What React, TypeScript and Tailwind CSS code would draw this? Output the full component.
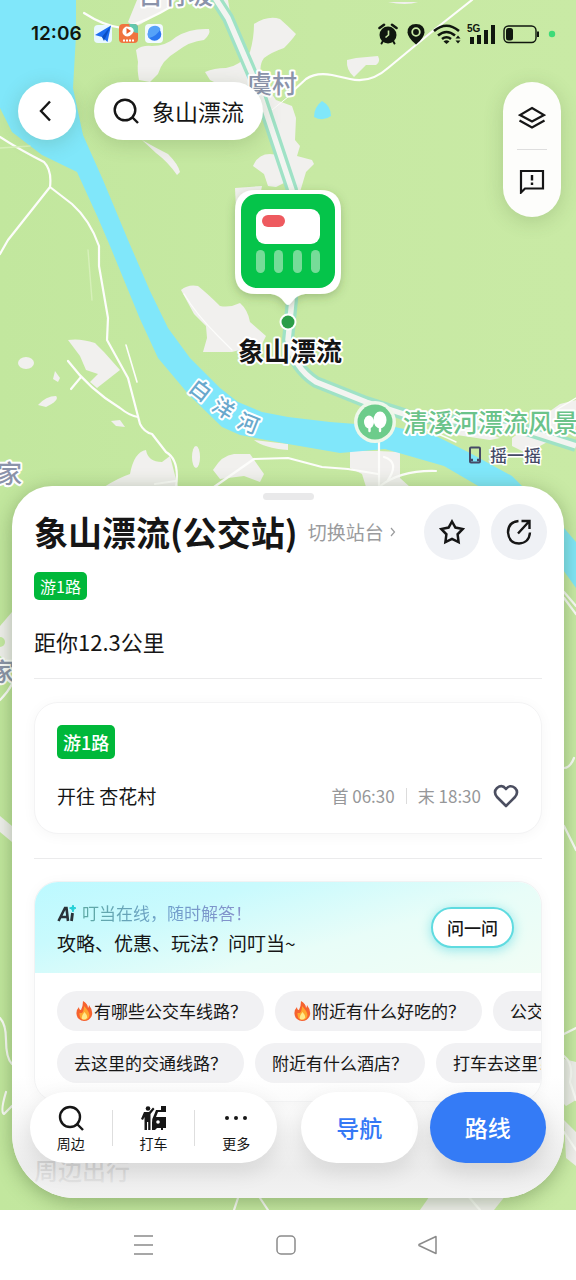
import type { ReactNode } from 'react';

type Chip = { text: string; hot?: boolean };

const CHIP_ROWS: Chip[][] = [
  [
    { text: '有哪些公交车线路？', hot: true },
    { text: '附近有什么好吃的？', hot: true },
    { text: '公交' },
  ],
  [{ text: '去这里的交通线路？' }, { text: '附近有什么酒店？' }, { text: '打车去这里？' }],
];

/** Map canvas: river, roads, villages and the station marker */
function MapCanvas() {
  return (
    <svg
      className="absolute inset-0 w-full h-full"
      viewBox="0 0 576 1210"
      preserveAspectRatio="xMidYMin slice"
      aria-label="地图"
    >
      <defs>
        <filter id="pinShadow" x="-30%" y="-30%" width="160%" height="160%">
          <feDropShadow dx="0" dy="3" stdDeviation="5" floodColor="#3c5a28" floodOpacity="0.3" />
        </filter>
        <linearGradient id="land" x1="0" x2="1" y1="0" y2="0">
          <stop offset="0" stopColor="#c2e79e" />
          <stop offset="0.55" stopColor="#c7e9a3" />
          <stop offset="1" stopColor="#c9eaa5" />
        </linearGradient>
      </defs>
      <rect width="576" height="1210" fill="url(#land)" />

      {/* villages */}
      <g fill="#f1f0ee">
        <path d="M137 0 128 22Q134 28 141 24L170 6 176 0Z" />
        <path d="M136 50Q142 45 152 46 166 46 176 37 190 28 209 29 211 34 204 40 190 41 176 52 162 60 158 74L150 82 139 80Q137 70 138 62Z" />
        <path d="M205 72Q214 68 226 68 240 66 250 52 254 38 254 24 268 15 280 19 288 26 296 34 292 40 284 48 272 52 264 58 258 66 262 80L276 100 292 106 296 118 295 140 300 146 297 156 312 160 314 164 306 172 300 192 290 188 268 120 254 84 226 88 210 80Z" />
        <path d="M220 0H228L230 12Q222 12 218 4Z" />
        <path d="M142 140Q156 148 168 154 178 164 180 172L177 175Q168 162 156 153Z" />
        <path d="M253 166Q258 154 270 154L288 156 290 180 276 187 268 186 264 174Z" />
        <path d="M235 188 262 186 258 206 236 210Z" />
        <path d="M347 60 356 58 378 56Q381 62 376 65L366 65 354 77Q346 70 347 60Z" />
        <path d="M388 2 418 2Q406 6 388 2Z" />
        <path d="M181 290Q188 284 198 286 208 294 220 306 230 308 240 303 248 310 250 322L266 336 262 344 232 352 203 352 207 338 206 326 194 314Z" />
        <path d="M68 340Q80 338 95 343L104 352 120 370 97 388 90 382 98 374 86 370 80 356Z" />
        <ellipse cx="26" cy="363" rx="8" ry="6" />
        <path d="M55 371 60 378 58 382 53 379Z" />
        <path d="M38 405Q46 396 56 396 60 400 46 407Z" />
        <path d="M111 421 120 420 125 427 116 426Z" />
        <path d="M104 487Q118 478 130 474 134 452 146 450 148 462 162 462L170 456 178 487Z" />
        <path d="M213 470Q222 455 234 454L250 454 264 474 260 482 244 476 220 479Z" />
        <ellipse cx="196" cy="457" rx="4" ry="11" />
        <path d="M254 440Q270 442 288 444V450Q264 448 254 440Z" />
        <path d="M350 451 378 451 400 452 400 478 410 487 366 487 362 474 350 468Z" />
        <path d="M430 424 480 430 500 438 490 440 450 434ZM512 438 560 404 576 400V426L540 446 524 452 512 446Z" />
        <path d="M0 626 12 612V664L0 656Z" />
        <path d="M0 816 12 826V842L0 832Z" />
        <path d="M560 1058 576 1062V1100L566 1106 560 1100ZM564 1120 576 1132V1166L566 1158Z" />
        <path d="M420 1210 434 1190H510L494 1210Z" />
      </g>
      <circle cx="0" cy="642" r="5" fill="#c5e9a2" />

      {/* river */}
      <path
        fill="#80e7fa"
        d="M0 0H76V35L73 88 83 135 103 180 128 240 150 291 168 328 190 358 220 388 238 402 262 412 288 417 330 422 395 427 436 436 470 453 512 476 564 528 576 542V588L556 560 480 487 444 466 385 449 340 453 288 444 240 435 222 427 190 396 158 358 140 319 110 246 98 218 77 172 42 155 12 132 0 108Z"
      />
      <path d="M322 101Q331 106 331 116 323 122 314 117 314 107 322 101Z" fill="#80e7fa" />

      {/* country roads */}
      <g fill="none" stroke="#fdfdfb" strokeWidth="2.2" strokeLinejoin="round" strokeLinecap="round">
        <path d="M0 137Q20 150 44 162 52 170 50 187L8 240 0 254M50 187 72 204Q90 220 99 246L99 266 108 318 107 340 128 378 140 424Q144 432 152 434L166 452Q180 460 176 487" />
        <path d="M68 361Q90 390 120 408 130 416 138 417M81 377 71 389" />
        <path d="M84 13Q104 26 122 28 146 22 172 6" />
        <path d="M294 90 306 79Q316 72 332 75L350 79Q370 84 388 68L434 30 472 0" />
        <path d="M272 110 294 92" strokeWidth="1" />
        <path d="M126 345 137 382" strokeWidth="1.6" />
        <path d="M184 294Q196 314 218 336L232 350" strokeWidth="1.2" />
        <path d="M155 484 176 481M214 487 254 459 288 458 322 467 348 469 378 474M379 442V487M379 487Q400 470 436 471M384 457Q400 462 388 480" />
        <path d="M556 410 576 398M418 427Q440 434 456 442" strokeWidth="1.4" />
        <path d="M0 700Q8 692 12 684M0 1018Q6 1024 6 1040 6 1058 12 1064M6 1092Q0 1112 4 1114L12 1106M564 592 576 606M564 598 576 614M564 768Q570 768 574 758M564 826 576 850M564 1034 576 1028M564 1056Q574 1064 570 1082L576 1100M564 1132 576 1150M238 1198 234 1210M260 1198 268 1210M468 1196 480 1210" />
        <path d="M0 148 30 146M88 250 92 300" stroke="#d6f0b9" strokeWidth="1.4" />
      </g>

      {/* highway */}
      <g fill="none" strokeLinejoin="round">
        <path d="M210-10 228 18 258 88 292 190 292 300 288 340Q294 368 316 382L366 402 410 416 520 428 576 446" stroke="#9fe2c6" strokeWidth="12" />
        <path d="M210-10 228 18 258 88 292 190 292 300 288 340Q294 368 316 382L366 402 410 416 520 428 576 446" stroke="#f3f4f1" strokeWidth="5.500" />
      </g>

      {/* place names */}
      <g
        fontFamily="'Noto Sans CJK SC', sans-serif"
        fontWeight="500"
        stroke="#ffffff"
        strokeWidth="4"
        strokeLinejoin="round"
        paintOrder="stroke"
      >
        <g fill="#8b93aa" fontSize="25">
          <text x="138" y="4">吉竹坡</text>
          <text x="247" y="93">虞村</text>
          <text x="-3" y="483">家</text>
          <text x="-10" y="681">家</text>
        </g>
        <g fill="#68a8cc" fontSize="21" textAnchor="middle">
          <text transform="translate(200 391) rotate(38)" y="7">白</text>
          <text transform="translate(223 409) rotate(32)" y="7">洋</text>
          <text transform="translate(248 424) rotate(22)" y="7">河</text>
        </g>
        <text x="403" y="432" fill="#6bc38a" fontSize="25">清溪河漂流风景区</text>
      </g>

      {/* scenic spot */}
      <g>
        <circle cx="375" cy="422" r="21" fill="#eef7ea" />
        <circle cx="375" cy="422" r="17.500" fill="#6dcc8b" />
        <ellipse cx="369" cy="422" rx="5" ry="6.500" fill="#fff" />
        <ellipse cx="380" cy="420" rx="6.500" ry="8.500" fill="#fff" />
        <path d="M369.500 420V431M380 420V431" stroke="#fff" strokeWidth="2.400" strokeLinecap="round" />
      </g>

      {/* station marker */}
      <path
        filter="url(#pinShadow)"
        fill="#fff"
        d="M256 190H320Q341 190 341 211V273Q341 294 320 294H305Q296 295 291 303 288 307 285 303 280 295 271 294H256Q235 294 235 273V211Q235 190 256 190Z"
      />
      <rect x="241" y="194" width="94" height="94" rx="16" fill="#05c44a" />
      <rect x="256" y="209" width="64" height="35" rx="9" fill="#fff" />
      <rect x="262" y="215" width="23" height="12" rx="6" fill="#ee5a5f" />
      <g fill="#76dc98">
        <rect x="256" y="250" width="9" height="23" rx="4.500" />
        <rect x="274" y="250" width="9" height="23" rx="4.500" />
        <rect x="293" y="250" width="9" height="23" rx="4.500" />
        <rect x="311" y="250" width="9" height="23" rx="4.500" />
      </g>
      <circle cx="288" cy="322" r="8.500" fill="#fff" />
      <circle cx="288" cy="322" r="6.500" fill="#2a9d48" />
      <text
        x="290"
        y="361"
        textAnchor="middle"
        fontFamily="'Noto Sans CJK SC', sans-serif"
        fontSize="26"
        fontWeight="700"
        fill="#151515"
        stroke="#fff"
        strokeWidth="4"
        strokeLinejoin="round"
        paintOrder="stroke"
      >
        象山漂流
      </text>
    </svg>
  );
}

function StatusBar() {
  return (
    <div className="relative flex h-[68px] items-center justify-between pl-[31px] pr-5">
      <div className="flex items-center">
        <span className="w-[62px] font-['Inter',sans-serif] text-[19px] leading-6 font-semibold text-[#10170f]">12:06</span>
        <svg width="72" height="20" viewBox="0 0 72 20" aria-hidden="true">
          <rect x="1" y="1" width="18" height="18" rx="4" fill="#e9f8ff" />
          <path d="M2 11 18 1.500 14.500 18 9 13Z" fill="#1c6df0" />
          <path d="M9 13 18 1.500 11 17Z" fill="#0b4fc4" />
          <rect x="26" y="0" width="19" height="19" rx="4" fill="#f0743f" />
          <path d="M36 0H41Q45 0 45 4V9Q38 9 36 0Z" fill="#63c7ae" />
          <path d="M33 2.500Q28 5 30 10 34 15 39 10 43 6 38 3Z" fill="#fff" />
          <path d="M33.500 4 38 7 33.500 10Z" fill="#e9602d" />
          <path d="M30 16.500H41" stroke="#fff" strokeWidth="2" strokeDasharray="2 1" />
          <rect x="52" y="0" width="18" height="19" rx="4" fill="#f2faff" />
          <circle cx="61.500" cy="10" r="6.800" fill="#2b78f0" />
          <path d="M56 14Q64 12 67.500 5A6.800 6.800 0 0 0 55 8Q54 12 56 14Z" fill="#56a2f8" />
        </svg>
      </div>
      <svg width="178" height="22" viewBox="0 0 178 22" fill="#10170f" aria-hidden="true">
        {/* alarm */}
        <circle cx="10" cy="12" r="8.500" />
        <path d="M1.500 5 6 1.800M18.500 5 14 1.800" stroke="#10170f" strokeWidth="2.600" strokeLinecap="round" />
        <path d="M5 18 3.500 20.500M15 18 16.500 20.500" stroke="#10170f" strokeWidth="2" strokeLinecap="round" />
        <path d="M10.500 7.500V12L7.500 14.500" stroke="#c9eaa5" strokeWidth="1.600" fill="none" />
        {/* location */}
        <path d="M38 1Q46.500 1 46.500 9.500 46 15 38 21.500 30 15 29.500 9.500 29.500 1 38 1Z" />
        <circle cx="38" cy="9" r="3.800" fill="none" stroke="#c9eaa5" strokeWidth="1.800" />
        {/* wifi */}
        <g fill="none" stroke="#10170f" strokeWidth="2.600">
          <path d="M56 8Q68.500-2.500 81 8" />
          <path d="M60 12.500Q68.500 5.500 77 12.500" />
          <path d="M64 16Q68.500 12.500 73 16" />
        </g>
        <path d="M65.500 18.500Q68.500 16 71.500 18.500L68.500 21Z" />
        <path d="M77.500 15.500 80 12.500 82.500 15.500ZM77.500 17.500 80 20.500 82.500 17.500Z" />
        {/* signal */}
        <text x="89" y="9" fontFamily="'Liberation Sans', sans-serif" fontWeight="700" fontSize="10">5G</text>
        <path d="M92 14h4v7h-4ZM99 12h4v9h-4ZM106 7h4v14h-4ZM113 2h4v19h-4Z" />
        {/* battery */}
        <rect x="126" y="3" width="32" height="16.500" rx="4.500" fill="none" stroke="#10170f" strokeWidth="1.400" />
        <rect x="128" y="5" width="7" height="12.500" rx="2.500" />
        <path d="M159 8.500H161V14H159Z" />
        <circle cx="174" cy="11" r="3.200" fill="#3ddb78" />
      </svg>
    </div>
  );
}

function MapControls() {
  return (
    <div className="relative flex items-start justify-between px-[15px] pt-[14px] pl-[18px] text-[#161616]">
      <div className="flex gap-[18px]">
        <button aria-label="返回" className="grid size-[58px] place-items-center rounded-full bg-white pr-1 shadow-[0_4px_20px_rgba(60,90,40,0.2)]">
          <svg width="14" height="22" viewBox="0 0 14 22" fill="none" stroke="currentColor" strokeWidth="2.400">
            <path d="M12 1.500 3 11 12 20.500" />
          </svg>
        </button>
        <button className="flex h-[58px] items-center gap-3 rounded-full bg-white pr-[19px] pl-[18px] shadow-[0_4px_20px_rgba(60,90,40,0.2)]">
          <svg width="28" height="28" viewBox="0 0 28 28" fill="none" stroke="currentColor" strokeWidth="2.400">
            <circle cx="13" cy="13" r="10.300" />
            <path d="M20 20 26 26" />
          </svg>
          <span className="text-[23px] leading-8">象山漂流</span>
        </button>
      </div>
      <div className="flex w-[58px] flex-col items-center rounded-full bg-[#fdfdfb] py-[5px] shadow-[0_4px_20px_rgba(60,90,40,0.2)]">
        <button aria-label="图层" className="grid h-[62px] w-full place-items-center">
          <svg width="28" height="24" viewBox="0 0 28 24" fill="none" stroke="currentColor" strokeWidth="2.200">
            <path d="M14 2 26 9 14 15.500 2 9Z" />
            <path d="M1.500 14.500 14 21.500 26.500 14.500" />
          </svg>
        </button>
        <span className="h-px w-[30px] bg-[#dedede]" />
        <button aria-label="反馈" className="grid h-[62px] w-full place-items-center">
          <svg width="26" height="26" viewBox="0 0 26 26" fill="none" stroke="currentColor" strokeWidth="2.200">
            <path d="M2 3H24V20.500H6L2 24.500Z" />
            <path d="M13 7V12.500M13 14.500V17" strokeWidth="2.400" />
          </svg>
        </button>
      </div>
    </div>
  );
}

function RoundButton({ label, children }: { label: string; children: ReactNode }) {
  return (
    <button aria-label={label} className="grid size-14 place-items-center rounded-full bg-[#eff1f5]">
      {children}
    </button>
  );
}

function LineCard() {
  return (
    <div className="mt-[23px] rounded-3xl border border-[#f3f3f4] bg-white px-[22px] py-[22px] shadow-[0_2px_14px_rgba(0,0,0,0.04)]">
      <span className="inline-block rounded-[5px] bg-[#00b83a] px-[6px] align-top text-[18px] leading-[34px] font-medium text-white">
        游1路
      </span>
      <div className="mt-[22px] flex h-[30px] items-center justify-between">
        <span className="text-[19px] text-[#161616]">开往 杏花村</span>
        <div className="flex items-center text-[17px] text-[#969799]">
          <span>首 06:30</span>
          <span className="mx-[11px] h-4 w-px bg-[#dcdcdc]" />
          <span>末 18:30</span>
          <button aria-label="收藏线路" className="ml-3">
            <svg width="26" height="24" viewBox="0 0 26 24" fill="none" stroke="#4b4e60" strokeWidth="2.600" strokeLinejoin="round">
              <path d="M13 22 4 13Q0 8 4 4 9 0 13 5 17 0 22 4 26 8 22 13Z" />
            </svg>
          </button>
        </div>
      </div>
    </div>
  );
}

function AssistantCard() {
  return (
    <div className="mt-[22px] overflow-hidden rounded-3xl border border-[#f1f2f3] bg-white shadow-[0_2px_14px_rgba(0,0,0,0.04)]">
      <div className="flex h-[91px] items-center justify-between bg-[linear-gradient(165deg,#bcf9ff_0%,#c9fafd_28%,#e8fdf8_62%,#f1fdf5_100%)] pr-[27px] pl-[22px]">
        <div>
          <div className="flex h-[29px] items-center gap-[6px]">
            <svg width="19" height="17" viewBox="0 0 19 17" fill="none" aria-label="Ai">
              <path d="M1.500 16 8 3H9.500L11 16M4 12H11" stroke="#2a3238" strokeWidth="2.600" />
              <path d="M15.500 8 14.500 16" stroke="#2a3238" strokeWidth="2.800" />
              <path d="M16 0Q16 3 19 3 16 3.500 16 7 15.500 3.500 12.500 3 16 3 16 0Z" fill="#21cfd6" stroke="#21cfd6" />
            </svg>
            <span className="bg-[linear-gradient(90deg,#5ea9a4,#6f9fcb_50%,#8a8fcb)] bg-clip-text text-[17px] text-transparent">
              叮当在线，随时解答！
            </span>
          </div>
          <p className="text-[19px] leading-[29px] text-[#161616]">攻略、优惠、玩法？问叮当~</p>
        </div>
        <button className="h-[41px] rounded-full border-2 border-[#5fdbe0] bg-white px-[14px] text-[17px] font-medium text-[#161616] shadow-[0_2px_12px_rgba(80,215,225,0.6)]">
          问一问
        </button>
      </div>
      <div className="flex flex-col gap-3 py-[18px] pl-[22px]">
        {CHIP_ROWS.map((row, i) => (
          <div key={i} className="flex gap-[11px]">
            {row.map(({ text, hot }) => (
              <button
                key={text}
                className="flex h-10 shrink-0 items-center rounded-full bg-[#f1f1f3] px-[17px] text-[17px] whitespace-nowrap text-[#161616]"
              >
                {hot && (
                  <svg width="20" height="20" viewBox="0 0 20 20" aria-hidden="true">
                    <path d="M9 0Q14 3 14 7 15 6 15 4 19 9 18 14 16 20 10 20 3 19 2.500 13 2 9 5 6 5 9 7 9 9 5 9 0Z" fill="#f6622f" />
                    <path d="M10 5Q15 10 15.500 14 15 19 10 19 5 18 5.500 12L8 12Q10 10 10 5Z" fill="#ffa62e" />
                    <path d="M10.500 11Q14 15 13 17 11 19.500 8 18 7 15 10.500 11Z" fill="#ffe98a" />
                  </svg>
                )}
                {text}
              </button>
            ))}
          </div>
        ))}
      </div>
    </div>
  );
}

function ToolItem({ label, children }: { label: string; children: ReactNode }) {
  return (
    <button className="flex h-[71px] flex-1 flex-col items-center pt-3">
      <span className="grid h-7 place-items-center">{children}</span>
      <span className="text-[14px] leading-[22px]">{label}</span>
    </button>
  );
}

function BottomToolbar() {
  return (
    <div className="absolute inset-x-0 bottom-0 bg-[linear-gradient(180deg,rgba(255,255,255,0)_0%,rgba(243,243,243,0.6)_35%,rgba(232,232,232,0.8)_75%,rgba(242,242,242,1)_100%)] px-[18px] pt-4 pb-[35px] text-[#161616]">
      <div className="flex">
        <div className="flex w-[247px] items-center rounded-full bg-white shadow-[0_8px_22px_rgba(0,0,0,0.10)]">
          <ToolItem label="周边">
            <svg width="26" height="26" viewBox="0 0 26 26" fill="none" stroke="currentColor" strokeWidth="2.400">
              <circle cx="12" cy="12" r="10" />
              <path d="M18.500 18.500 25 25" />
            </svg>
          </ToolItem>
          <span className="h-9 w-px bg-[#dedede]" />
          <ToolItem label="打车">
            <svg width="26" height="25" viewBox="0 0 26 25" fill="currentColor">
              <circle cx="7" cy="2.500" r="2.300" />
              <path d="M3 6H8L12 1.500 13.500 3 9.500 8V24H7.200V16H6V24H3.500V11L2 14 0 13Z" />
              <path d="M20 0H25V4H20ZM15 4H25V6H17L15 11H25V22H22V24H20V22H16L14 24H11V17Q11 12 13 9Z" />
              <circle cx="17" cy="16" r="1.800" fill="#fff" />
            </svg>
          </ToolItem>
          <span className="h-9 w-px bg-[#dedede]" />
          <ToolItem label="更多">
            <svg width="24" height="6" viewBox="0 0 24 6" fill="currentColor">
              <circle cx="3" cy="3" r="2" />
              <circle cx="12" cy="3" r="2" />
              <circle cx="21" cy="3" r="2" />
            </svg>
          </ToolItem>
        </div>
        <button className="ml-6 h-[71px] flex-1 rounded-full bg-white text-[23px] font-medium text-[#3478f6] shadow-[0_8px_22px_rgba(0,0,0,0.10)]">
          导航
        </button>
        <button className="ml-3 h-[71px] flex-1 rounded-full bg-[#347bf6] text-[23px] font-medium text-white shadow-[0_8px_22px_rgba(0,0,0,0.12)]">
          路线
        </button>
      </div>
    </div>
  );
}

function StationSheet() {
  return (
    <section className="relative mx-3 mb-3 overflow-hidden rounded-t-[40px] rounded-b-[64px] bg-white px-[22px] pt-[7px] shadow-[0_4px_20px_rgba(60,90,40,0.4)]">
      <div className="mx-auto h-[7px] w-[51px] rounded-full bg-[#e9e9ea]" />
      <div className="-mr-[5px] mt-1 flex h-14 items-center">
        <h1 className="text-[34px] leading-[48px] font-bold whitespace-nowrap text-[#161616]">象山漂流(公交站)</h1>
        <a href="#platform" className="ml-[10px] flex items-center gap-[6px] text-[19px] whitespace-nowrap text-[#9a9b9d]">
          切换站台
          <svg width="6" height="10" viewBox="0 0 6 10" fill="none" stroke="currentColor" strokeWidth="1.200">
            <path d="M1 1 4.500 5 1 9" />
          </svg>
        </a>
        <div className="ml-auto flex gap-[11px]">
          <RoundButton label="收藏">
            <svg width="26" height="26" viewBox="0 0 26 26" fill="none" stroke="#161616" strokeWidth="2.500">
              <path d="M13 2.500 16.400 8.600 23.800 10 18.600 15.300 19.600 23 13 19.800 6.400 23 7.400 15.300 2.200 10 9.600 8.600Z" />
            </svg>
          </RoundButton>
          <RoundButton label="分享">
            <svg width="26" height="28" viewBox="0 0 26 28" fill="none" stroke="#161616" strokeWidth="2.400">
              <path d="M12.500 3Q2 4 2 14.500 3 25.500 13 25.500 23 25 24 14.500" />
              <path d="M12 15.500 23 3.500M15.500 3H23.500V11" />
            </svg>
          </RoundButton>
        </div>
      </div>
      <span className="mt-3 block w-fit rounded-[5px] bg-[#00b83a] px-[6px] text-[16px] leading-7 text-white">游1路</span>
      <p className="mt-[27px] text-[22px] leading-7 text-[#161616]">距你12.3公里</p>
      <hr className="mt-[23px] border-[#ebebec]" />
      <LineCard />
      <hr className="mt-6 border-[#ebebec]" />
      <AssistantCard />
      <h2 className="mt-[54px] pb-[14px] text-[24px] leading-7 font-medium text-[#161616]/50">周边出行</h2>
      <BottomToolbar />
    </section>
  );
}

function SystemNav() {
  return (
    <nav className="flex h-[70px] items-center justify-center gap-[118px] bg-white pr-1 text-[#8b8b8b]">
      <button aria-label="最近任务">
        <svg width="24" height="24" viewBox="0 0 24 24" fill="none" stroke="currentColor" strokeWidth="1.500">
          <path d="M2 3H21M2 12H21M2 21H21" />
        </svg>
      </button>
      <button aria-label="主屏幕">
        <svg width="24" height="24" viewBox="0 0 24 24" fill="none" stroke="currentColor" strokeWidth="1.500">
          <rect x="3" y="3" width="18" height="18" rx="4" />
        </svg>
      </button>
      <button aria-label="返回上一页">
        <svg width="24" height="24" viewBox="0 0 24 24" fill="none" stroke="currentColor" strokeWidth="1.500" strokeLinejoin="round">
          <path d="M20 3.500V20.500L3 12.500V11.500Z" />
        </svg>
      </button>
    </nav>
  );
}

export default function App() {
  return (
    <div className="flex min-h-screen flex-col bg-white font-['Noto_Sans_CJK_SC',sans-serif]">
      <main className="relative flex flex-1 flex-col overflow-hidden">
        <MapCanvas />
        <StatusBar />
        <MapControls />
        <div className="relative mt-auto flex items-center justify-end gap-2 pr-[35px] pb-[18px]">
          <svg width="14" height="18" viewBox="0 0 14 18" fill="none" stroke="#454a66" strokeWidth="2">
            <rect x="2" y="1.500" width="10" height="15" rx="1" />
            <path d="M2 14H5M9 14H12" strokeWidth="2.600" />
          </svg>
          <span className="text-[17px] leading-[26px] font-medium text-[#454a66] [-webkit-text-stroke:3px_#fff] [paint-order:stroke]">
            摇一摇
          </span>
        </div>
        <StationSheet />
      </main>
      <SystemNav />
    </div>
  );
}
